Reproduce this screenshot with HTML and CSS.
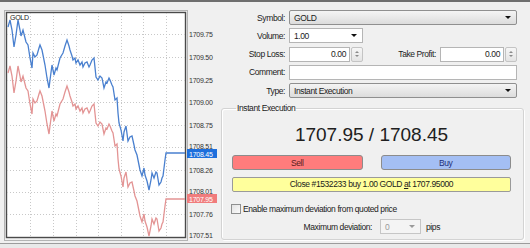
FILE: index.html
```html
<!DOCTYPE html>
<html lang="en">
<head>
    <meta charset="UTF-8">
    <title>Order - GOLD</title>
    <link rel="stylesheet" href="styles.css">
</head>
<body>
    <div class="window">
        <div class="chart">
            <svg width="222" height="241" viewBox="0 2 222 241">
                <defs>
                    <polyline id="tick-line" fill="none" points="8,27 10,20 12,30 14,47 16,35 18,20 20,30 21,36 23,30 25,38 26,42 28,45 30,58 32,68 33,53 35,57 37,55 39,48 40,45 42,50 43,55 45,65 47,78 49,88 50,80 52,65 54,75 56,68 57,70 59,62 60,58 63,53 65,46 67,40 69,46 70,50 72,56 73,60 75,58 76,63 78,60 80,65 82,62 83,67 85,63 87,62 89,67 90,65 92,60 94,58 96,77 98,80 100,76 102,78 104,88 106,82 107,83 109,78 110,80 112,85 113,87 115,100 117,98 118,113 119,123 121,130 123,141 124,132 126,126 128,141 130,137 132,136 134,145 135,150 137,155 138,160 140,170 142,176 144,168 145,175 147,181 149,190 151,180 152,173 154,178 156,172 157,173 159,185 161,182 162,178 163,176 165,160 166,153 185,153"/>
                </defs>
                <rect class="frame-outer" x="4.5" y="10.5" width="183" height="230"/>
                <rect class="plot" x="6.5" y="12.5" width="179" height="225"/>
                <g class="grid">
                    <line x1="30.5" y1="13" x2="30.5" y2="237"/>
                    <line x1="53.5" y1="13" x2="53.5" y2="237"/>
                    <line x1="76.5" y1="13" x2="76.5" y2="237"/>
                    <line x1="98.5" y1="13" x2="98.5" y2="237"/>
                    <line x1="121.5" y1="13" x2="121.5" y2="237"/>
                    <line x1="143.5" y1="13" x2="143.5" y2="237"/>
                    <line x1="166.5" y1="13" x2="166.5" y2="237"/>
                    <line x1="7" y1="34.5" x2="185" y2="34.5"/>
                    <line x1="7" y1="57.5" x2="185" y2="57.5"/>
                    <line x1="7" y1="80.5" x2="185" y2="80.5"/>
                    <line x1="7" y1="102.5" x2="185" y2="102.5"/>
                    <line x1="7" y1="125.5" x2="185" y2="125.5"/>
                    <line x1="7" y1="147.5" x2="185" y2="147.5"/>
                    <line x1="7" y1="170.5" x2="185" y2="170.5"/>
                    <line x1="7" y1="192.5" x2="185" y2="192.5"/>
                    <line x1="7" y1="214.5" x2="185" y2="214.5"/>
                </g>
                <use href="#tick-line" class="ask-line"/>
                <use href="#tick-line" class="bid-line" transform="translate(0,46)"/>
                <text class="symbol-name" x="10" y="20">GOLD</text>
                <g class="scale">
                    <text x="189" y="37">1709.75</text>
                    <text x="189" y="60">1709.50</text>
                    <text x="189" y="83">1709.25</text>
                    <text x="189" y="105">1709.00</text>
                    <text x="189" y="128">1708.75</text>
                    <text x="189" y="149">1708.51</text>
                    <text x="189" y="173">1708.26</text>
                    <text x="189" y="194">1708.01</text>
                    <text x="189" y="217">1707.76</text>
                    <text x="189" y="238">1707.51</text>
                </g>
                <rect class="tag-ask" x="187" y="149" width="30" height="9"/>
                <text class="tag-text" x="189" y="156.5">1708.45</text>
                <rect class="tag-bid" x="187" y="194" width="30" height="9"/>
                <text class="tag-text" x="189" y="201.5">1707.95</text>
            </svg>
        </div>

        <div class="panel">
            <div class="form">
                <label>Symbol:</label>
                <div class="combo"><span>GOLD</span><i class="arrow"></i></div>

                <label>Volume:</label>
                <div class="combo edit volume"><span>1.00</span><i class="arrow"></i></div>

                <label>Stop Loss:</label>
                <div class="sl-row">
                    <div class="spinbox sl"><span class="value">0.00</span><div class="spin"><i class="up"></i><i class="down"></i></div></div>
                    <label class="tp-label">Take Profit:</label>
                    <div class="spinbox tp"><span class="value">0.00</span><div class="spin"><i class="up"></i><i class="down"></i></div></div>
                </div>

                <label>Comment:</label>
                <div class="field"></div>

                <label>Type:</label>
                <div class="combo"><span>Instant Execution</span><i class="arrow"></i></div>
            </div>

            <fieldset class="group">
                <legend>Instant Execution</legend>
                <div class="quote">1707.95 / 1708.45</div>
                <div class="actions">
                    <button class="btn sell">Sell</button>
                    <button class="btn buy">Buy</button>
                </div>
                <div class="close-bar">Close #1532233 buy 1.00 GOLD <u>a</u>t 1707.95000</div>
                <label class="check"><span class="box"></span>Enable maximum deviation from quoted price</label>
                <div class="deviation">
                    <span class="dev-label">Maximum deviation:</span>
                    <div class="combo disabled"><span>0</span><i class="arrow"></i></div>
                    <span class="pips">pips</span>
                </div>
            </fieldset>
        </div>
    </div>
</body>
</html>
```

FILE: styles.css
```css
* {
    margin: 0;
    padding: 0;
    box-sizing: border-box;
}
body {
    font-family: 'Liberation Sans', Arial, sans-serif;
    font-size: 8.5px;
    letter-spacing: -0.4px;
    color: #1b1b1b;
    background: #e9e9e9;
    width: 530px;
    height: 248px;
    overflow: hidden;
}
.window {
    display: flex;
    height: 244px;
    background: #f0f0f0;
    border-top: 2px solid #6f6f6f;
    border-bottom: 1px solid #9c9c9c;
}

/* chart */
.chart {
    width: 222px;
    flex: none;
}
.chart svg {
    display: block;
}
.frame-outer {
    fill: none;
    stroke: #b4b4b4;
}
.plot {
    fill: #fff;
    stroke: #4a4a4a;
    stroke-width: 1.4;
}
.grid line {
    stroke: #c8c8c8;
    stroke-width: 1;
    stroke-dasharray: 1 2;
}
.ask-line {
    stroke: #4a80cf;
    stroke-width: 1.3;
}
.bid-line {
    stroke: #e39494;
    stroke-width: 1.3;
}
.symbol-name {
    font-size: 7px;
    letter-spacing: -0.3px;
    fill: #222;
}
.scale text {
    font-size: 7px;
    letter-spacing: -0.25px;
    fill: #333;
}
.tag-ask { fill: #1e6fdc; }
.tag-bid { fill: #f07c7c; }
.tag-text {
    font-size: 7px;
    letter-spacing: -0.25px;
    fill: #fff;
}

/* order form */
.panel {
    flex: 1;
    padding-top: 8px;
}
.form {
    display: grid;
    grid-template-columns: 63px 1fr;
    grid-auto-rows: 15px;
    column-gap: 4px;
    row-gap: 3.3px;
    padding-right: 13px;
}
.form > label {
    text-align: right;
    align-self: center;
}
.combo {
    display: flex;
    align-items: center;
    justify-content: space-between;
    height: 15px;
    padding: 0 5px 0 4px;
    border: 1px solid #8f8f8f;
    border-radius: 2px;
    background: linear-gradient(#f4f4f4, #e8e8e8 50%, #dcdcdc);
}
.combo.edit {
    background: #fff;
    border-color: #b5b5b5;
    border-radius: 0;
}
.volume {
    width: 74px;
}
.arrow {
    width: 0;
    height: 0;
    border-left: 3px solid transparent;
    border-right: 3px solid transparent;
    border-top: 3px solid #111;
}
.sl-row {
    display: flex;
    align-items: center;
}
.spinbox {
    display: flex;
    height: 15px;
}
.spinbox .value {
    flex: 1;
    text-align: right;
    line-height: 13px;
    padding-right: 3px;
    background: #fff;
    border: 1px solid #b5b5b5;
}
.sl { width: 74px; }
.tp { width: 77px; }
.tp-label {
    flex: 1;
    text-align: right;
    padding-right: 4px;
}
.spin {
    width: 12px;
    display: flex;
    flex-direction: column;
    align-items: center;
    justify-content: center;
    gap: 2px;
    margin-left: 1px;
    border: 1px solid #c4c4c4;
    border-radius: 2px;
    background: linear-gradient(#f6f6f6, #e4e4e4);
}
.spin .up, .spin .down {
    width: 0;
    height: 0;
    border-left: 2.5px solid transparent;
    border-right: 2.5px solid transparent;
}
.spin .up { border-bottom: 2.5px solid #8a8a8a; }
.spin .down { border-top: 2.5px solid #8a8a8a; }
.field {
    background: #fff;
    border: 1px solid #b5b5b5;
}

/* execution group */
.group {
    margin: 5px 6px 0 -1px;
    height: 137px;
    padding: 0 12px 0 10px;
    border: 1px solid #d3d3d3;
    border-radius: 3px;
    box-shadow: inset 1px 1px 0 #fff, 1px 1px 0 #fff;
}
.group legend {
    margin-left: 4px;
    padding: 0 1px;
    line-height: 10px;
}
.quote {
    margin-top: 11px;
    font-size: 19px;
    letter-spacing: 0;
    line-height: 22px;
    text-align: center;
    color: #202020;
}
.actions {
    display: flex;
    gap: 18px;
    margin-top: 9px;
}
.btn {
    flex: 1;
    height: 15px;
    font-family: inherit;
    font-size: 8.5px;
    letter-spacing: -0.4px;
    border: 1px solid #8c8c8c;
    border-radius: 3px;
}
.sell {
    background: #ff7c7c;
    color: #5a1c1c;
}
.buy {
    background: #a4bff4;
    color: #1f2f7a;
}
.close-bar {
    margin-top: 7px;
    height: 15px;
    line-height: 13px;
    text-align: center;
    background: #ffff9c;
    border: 1px solid #9a9a9a;
    border-radius: 2px;
}
.check {
    display: flex;
    align-items: center;
    gap: 2px;
    height: 11px;
    margin: 11px 0 0 -1px;
}
.check .box {
    width: 10px;
    height: 10px;
    background: linear-gradient(135deg, #e2e2e2, #fbfbfb);
    border: 1px solid #8e8f8f;
}
.deviation {
    display: flex;
    align-items: center;
    height: 15px;
    margin-top: 5px;
}
.dev-label {
    width: 140px;
    text-align: right;
}
.combo.disabled {
    width: 41px;
    margin-left: 8px;
    background: #f4f4f4;
    border-color: #c6c6c6;
    border-radius: 0;
    color: #9a9a9a;
}
.combo.disabled .arrow {
    border-top-color: #9a9a9a;
}
.pips {
    margin-left: 5px;
}
```
